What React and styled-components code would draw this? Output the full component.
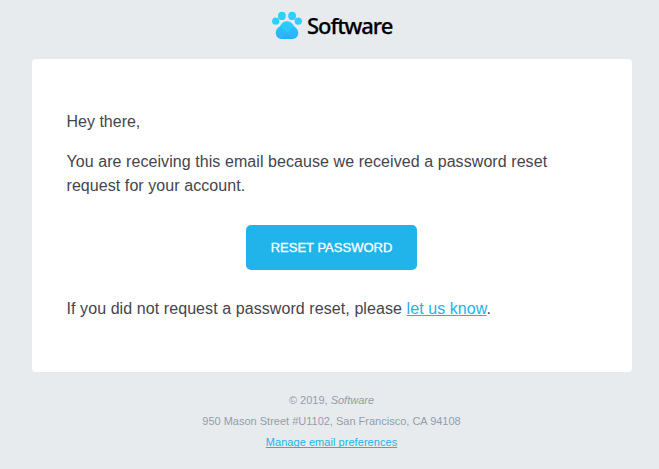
import React from "react";
import styled, { createGlobalStyle } from "styled-components";

const GlobalStyle = createGlobalStyle`
  * { box-sizing: border-box; }
  body {
    margin: 0;
    background: #e8ebee;
    font-family: "Liberation Sans", Arial, sans-serif;
  }
`;

const Page = styled.div`
  height: 469px;
  padding-right: 27px;
  padding-left: 32px;
  overflow: hidden;
  background: #e8ebee;
`;

const Header = styled.header`
  display: flex;
  height: 59px;
  padding: 11px 0 0 240px;
  align-items: flex-start;
`;

const Paw = styled.svg`
  flex: none;
  width: 30px;
  height: 29px;
`;

const Wordmark = styled.span`
  margin-left: 5px;
  font-family: "Noto Sans", sans-serif;
  font-size: 22px;
  font-weight: 500;
  line-height: 29px;
  letter-spacing: -1.05px;
  color: #000;
  -webkit-text-stroke: 0.25px #000;
`;

const Card = styled.main`
  height: 313px;
  padding: 51px 35px 0;
  border-radius: 4px;
  background: #fff;
`;

const Paragraph = styled.p`
  margin: 0 0 16px -0.5px;
  font-size: 16px;
  line-height: 24px;
  letter-spacing: ${(p) => p.$spacing || "0"};
  white-space: nowrap;
  color: #45444e;
`;

const Link = styled.a`
  color: #20b4ea;
  text-decoration: underline;
  text-decoration-skip-ink: none;
`;

const ButtonRow = styled.div`
  display: flex;
  justify-content: center;
  padding: 11px 1px 27px 0;
`;

const Button = styled.button`
  width: 171px;
  height: 45px;
  padding: 0;
  border: 0;
  border-radius: 5px;
  background: #20b4ea;
  color: #fff;
  font-family: inherit;
  font-size: 13px;
  line-height: 45px;
  -webkit-text-stroke: 0.3px #fff;
`;

const Footer = styled.footer`
  padding: 18px 1px 0 0;
  text-align: center;
`;

const FooterLine = styled.div`
  font-size: 11px;
  line-height: 21px;
  letter-spacing: ${(p) => p.$spacing || "0"};
  color: #929daa;
`;

function PawLogo() {
  return (
    <Paw viewBox="0 0 30 29" aria-hidden="true">
      <defs>
        <linearGradient id="pad" x1="0" y1="0" x2="0" y2="1">
          <stop offset="0" stopColor="#2bd4fe" />
          <stop offset="1" stopColor="#22aafc" />
        </linearGradient>
        <clipPath id="padShape">
          <path d="M15 10.2C11.6 10.2 9.8 12 8.4 14.6C7.4 16.4 3.8 17.2 3.8 21.8C3.8 25.6 6.4 28 9.8 28H20.2C23.6 28 26.2 25.6 26.2 21.8C26.2 17.2 22.6 16.4 21.6 14.6C20.2 12 18.4 10.2 15 10.2Z" />
        </clipPath>
      </defs>
      <g fill="#2bd0fe">
        <ellipse cx="9.9" cy="4.9" rx="3.9" ry="4.2" />
        <ellipse cx="20.1" cy="4.9" rx="3.9" ry="4.2" />
        <circle cx="3.7" cy="10.2" r="3.6" />
        <circle cx="26.3" cy="10.2" r="3.6" />
      </g>
      <g clipPath="url(#padShape)">
        <rect x="3" y="10" width="24" height="19" fill="url(#pad)" />
        <path d="M9 16l6 6-6 6-6-6zM21 16l6 6-6 6-6-6z" fill="#2eb8fd" opacity=".6" />
        <path d="M15 10l6 6-6 6-6-6z" fill="#2bcbfe" opacity=".7" />
      </g>
    </Paw>
  );
}

export default function App() {
  return (
    <>
      <GlobalStyle />
      <Page>
        <Header>
          <PawLogo />
          <Wordmark>Software</Wordmark>
        </Header>
        <Card>
          <Paragraph>Hey there,</Paragraph>
          <Paragraph $spacing="0.07px">
            You are receiving this email because we received a password reset
            <br />
            request for your account.
          </Paragraph>
          <ButtonRow>
            <Button type="button">RESET PASSWORD</Button>
          </ButtonRow>
          <Paragraph $spacing="0.08px">
            If you did not request a password reset, please <Link href="#">let us know</Link>.
          </Paragraph>
        </Card>
        <Footer>
          <FooterLine>
            © 2019, <em>Software</em>
          </FooterLine>
          <FooterLine>950 Mason Street #U1102, San Francisco, CA 94108</FooterLine>
          <FooterLine $spacing="0.05px">
            <Link href="#">Manage email preferences</Link>
          </FooterLine>
        </Footer>
      </Page>
    </>
  );
}
